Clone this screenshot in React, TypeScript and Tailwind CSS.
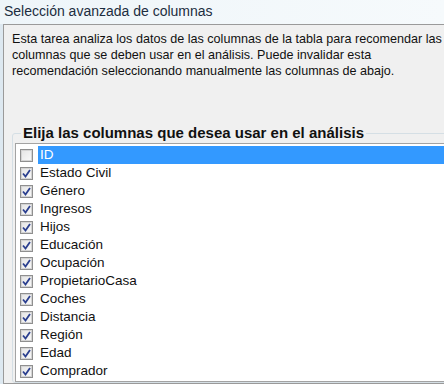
const columns = [
  { name: 'ID', checked: false },
  { name: 'Estado Civil', checked: true },
  { name: 'Género', checked: true },
  { name: 'Ingresos', checked: true },
  { name: 'Hijos', checked: true },
  { name: 'Educación', checked: true },
  { name: 'Ocupación', checked: true },
  { name: 'PropietarioCasa', checked: true },
  { name: 'Coches', checked: true },
  { name: 'Distancia', checked: true },
  { name: 'Región', checked: true },
  { name: 'Edad', checked: true },
  { name: 'Comprador', checked: true },
]

function CheckBox({ checked }: { checked: boolean }) {
  return (
    <span className="flex h-[13px] w-[13px] shrink-0 items-center justify-center border border-[#8f8f8f] bg-white">
      <span className="flex h-[11px] w-[11px] items-center justify-center border border-[#d4d4d4] bg-gradient-to-br from-[#e6e6e6] to-[#f8f8f8]">
        {checked && (
          <svg width="9" height="9" viewBox="0 0 9 9">
            <path d="M1 4.5 L3.5 7.5 L8 1" fill="none" stroke="#2b3f8f" strokeWidth="1.8" />
          </svg>
        )}
      </span>
    </span>
  )
}

export default function App() {
  return (
    <div className="flex h-[384px] w-[444px] flex-col overflow-hidden bg-[#dde8f0] font-['Liberation_Sans',Arial,sans-serif]">
      <div className="h-[24px] shrink-0 bg-gradient-to-r from-[#eef5f9] to-[#f6fafc] pl-[4px] pt-[2px] text-[14px] leading-[18px] text-[#1c2d40]">
        Selección avanzada de columnas
      </div>
      <div className="ml-[3px] flex w-[480px] flex-1 flex-col border border-[#9a9a9a] bg-[#f0f0f0]">
        <p className="pl-[8px] pt-[6px] text-[12.6px] leading-[16px] text-[#111]">
          Esta tarea analiza los datos de las columnas de la tabla para recomendar las
          <br />
          columnas que se deben usar en el análisis. Puede invalidar esta
          <br />
          recomendación seleccionando manualmente las columnas de abajo.
        </p>
        <fieldset className="ml-[8px] mt-[46px] flex-1 rounded-[3px] border border-[#d5dfe5] pl-[2px] pt-0">
          <legend className="ml-[6px] px-[2px] text-[15px] font-bold leading-[16px] text-[#111]">
            Elija las columnas que desea usar en el análisis
          </legend>
          <ul className="mt-[2px] border border-[#a3a3a3] bg-white pb-[1px] pt-[2px]">
            {columns.map((c, i) => (
              <li key={c.name} className="flex h-[18px] items-center text-[13.5px] leading-[18px] text-[#111]">
                <span className="ml-[4px] mr-[5px]">
                  <CheckBox checked={c.checked} />
                </span>
                <span className={i === 0 ? 'flex-1 bg-[#3399ff] pl-[2px] text-white' : 'pl-[2px]'}>{c.name}</span>
              </li>
            ))}
          </ul>
        </fieldset>
      </div>
    </div>
  )
}
